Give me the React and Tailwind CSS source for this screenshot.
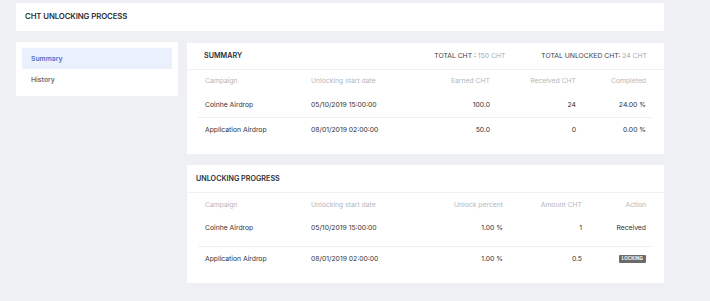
const summaryRows = [
  { campaign: "Coinhe Airdrop", date: "05/10/2019 15:00:00", earned: "100.0", received: "24", completed: "24.00 %" },
  { campaign: "Application Airdrop", date: "08/01/2019 02:00:00", earned: "50.0", received: "0", completed: "0.00 %" },
];

const progressRows = [
  { campaign: "Coinhe Airdrop", date: "05/10/2019 15:00:00", percent: "1.00 %", amount: "1", action: "Received" },
  { campaign: "Application Airdrop", date: "08/01/2019 02:00:00", percent: "1.00 %", amount: "0.5", action: "locking" },
];

function App() {
  return (
    <div className="w-[710px] h-[301px] bg-[#eef0f3] pt-[3px] pl-[16px] text-[#2f3236] font-['Inter',_'Noto_Sans',_sans-serif] overflow-hidden">
      {/* Page header */}
      <div className="w-[648px] h-[28px] bg-white flex items-center pl-[9px]">
        <span className="text-[7.8px] font-semibold tracking-[-0.1px] text-[#2d3035]">CHT UNLOCKING PROCESS</span>
      </div>

      <div className="flex mt-[11px] gap-[9px]">
        {/* Sidebar */}
        <div className="w-[162px] h-[54px] bg-white px-[6px] pt-[6px]">
          <div className="h-[21px] bg-[#eaf0fc] flex items-center pl-[9px] pt-[1px] text-[6.8px] font-semibold text-[#4d6fcf]">
            Summary
          </div>
          <div className="h-[21px] flex items-center pl-[9px] pt-[1px] text-[6.8px] font-semibold text-[#6b7078]">
            History
          </div>
        </div>

        <div className="w-[477px] mt-[1px]">
          {/* Summary */}
          <div className="h-[111px] bg-white">
            <div className="h-[27px] border-b border-[#f0f1f3] flex items-center justify-between pl-[17px] pr-[17px]">
              <span className="text-[7.2px] font-semibold text-[#2d3035]">SUMMARY</span>
              <div className="flex gap-[36px] text-[6.8px]">
                <span className="text-[#3a3d42]">TOTAL CHT : <span className="text-[#a3a9b1]">150 CHT</span></span>
                <span className="text-[#3a3d42]">TOTAL UNLOCKED CHT: <span className="text-[#a3a9b1]">24 CHT</span></span>
              </div>
            </div>
            <div className="px-[11px] pr-[12px]">
              <div className="grid grid-cols-[106px_109px_70px_86px_70px] h-[23px] items-center pl-[7px] text-[6.8px] text-[#b2b7be]">
                <span>Campaign</span>
                <span>Unlocking start date</span>
                <span className="text-right">Earned CHT</span>
                <span className="text-right">Received CHT</span>
                <span className="text-right">Completed</span>
              </div>
              {summaryRows.map((r, i) => (
                <div
                  key={r.campaign}
                  className={`grid grid-cols-[106px_109px_70px_86px_70px] h-[25px] items-center pl-[7px] text-[6.8px] text-[#2f3236] ${i === 0 ? "border-b border-[#eef0f2]" : ""}`}
                >
                  <span>{r.campaign}</span>
                  <span>{r.date}</span>
                  <span className="text-right">{r.earned}</span>
                  <span className="text-right">{r.received}</span>
                  <span className="text-right">{r.completed}</span>
                </div>
              ))}
            </div>
          </div>

          {/* Unlocking progress */}
          <div className="h-[118px] bg-white mt-[11px]">
            <div className="h-[28px] border-b border-[#f0f1f3] flex items-center pl-[9px] pt-[1px]">
              <span className="text-[7.2px] font-semibold text-[#2d3035]">UNLOCKING PROGRESS</span>
            </div>
            <div className="px-[11px] pr-[12px]">
              <div className="grid grid-cols-[106px_119px_73px_79px_64px] h-[24px] items-center pl-[7px] text-[6.8px] text-[#b2b7be]">
                <span>Campaign</span>
                <span>Unlocking start date</span>
                <span className="text-right">Unlock percent</span>
                <span className="text-right">Amount CHT</span>
                <span className="text-right">Action</span>
              </div>
              {progressRows.map((r, i) => (
                <div
                  key={r.campaign}
                  className={`grid grid-cols-[106px_119px_73px_79px_64px] items-center pl-[7px] text-[6.8px] text-[#2f3236] ${i === 0 ? "h-[30px] pb-[6px] border-b border-[#eef0f2]" : "h-[24px]"}`}
                >
                  <span>{r.campaign}</span>
                  <span>{r.date}</span>
                  <span className="text-right">{r.percent}</span>
                  <span className="text-right">{r.amount}</span>
                  <span className="flex justify-end">
                    {r.action === "locking" ? (
                      <span className="h-[8px] px-[3px] bg-[#6a6b6d] rounded-[1px] text-white text-[4.5px] font-bold leading-[8px] tracking-[0.1px]">
                        LOCKING
                      </span>
                    ) : (
                      r.action
                    )}
                  </span>
                </div>
              ))}
            </div>
          </div>
        </div>
      </div>
    </div>
  );
}

export default App;
